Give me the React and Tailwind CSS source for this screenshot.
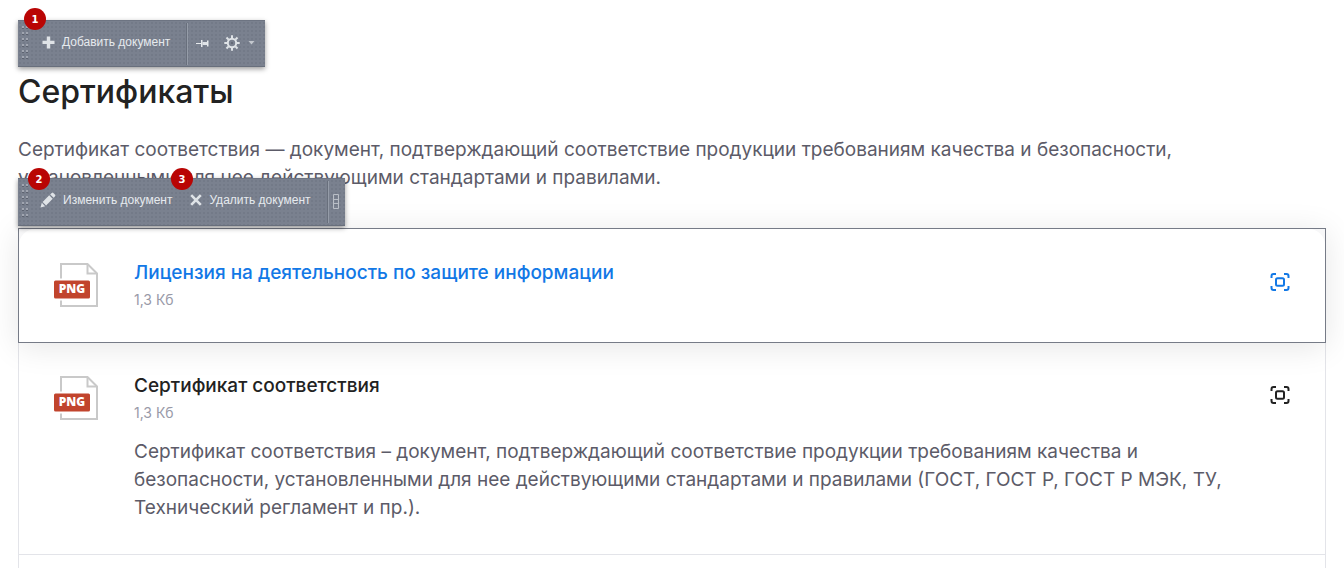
import React from "react";

const GRIP_DOTS = [3, 9, 15, 21, 27, 33];

const Badge = ({ children, className }) => (
  <span
    className={`absolute z-30 flex size-[22px] items-center justify-center rounded-full bg-[#b90504] font-['DejaVu_Sans',sans-serif] text-[10px] font-bold text-white ${className}`}
  >
    {children}
  </span>
);

const Grip = () => (
  <svg className="h-[42px] w-[6px] shrink-0" viewBox="0 0 6 42" aria-hidden="true">
    {GRIP_DOTS.map((y) => (
      <g key={y}>
        <path d={`M0 ${y + 2}h2v1h-2zM4 ${y + 2}h2v1h-2z`} fill="#5d6370" />
        <path d={`M0 ${y}h2v2h-2zM4 ${y}h2v2h-2z`} fill="#a0a5b0" />
      </g>
    ))}
  </svg>
);

const Divider = () => (
  <span className="h-[42px] w-[2px] shrink-0 border-l border-[#686f7c] bg-[#959ca8]" />
);

const PlusIcon = () => (
  <svg width="13" height="13" viewBox="0 0 13 13" fill="#dfe3e7" aria-hidden="true">
    <path d="M4.8 0.5h3.4v4.3h4.3v3.2H8.2v4.5H4.8V8H0.5V4.8h4.3z" />
  </svg>
);

const PinIcon = () => (
  <svg width="13" height="9" viewBox="0 0 13 9" aria-hidden="true">
    <path d="M0 4h5v1H0zM5 1h1.500v7H5zM11 1.500h1.500v6H11z" fill="#e6e9ec" />
    <path d="M6.500 3h4.500v3H6.500z" fill="#dfe3e7" />
  </svg>
);

const GearIcon = () => (
  <svg width="16" height="16" viewBox="0 0 16 16" fill="none" stroke="#dfe3e7" aria-hidden="true">
    <circle cx="8" cy="8" r="4.2" strokeWidth="2" />
    <circle cx="8" cy="8" r="1" fill="#5f6673" stroke="none" />
    <path
      d="M8 .3v3M8 12.700v3M.3 8h3M12.700 8h3M2.500 2.500l2.100 2.100M11.400 11.400l2.100 2.100M13.500 2.500l-2.100 2.100M4.600 11.400l-2.100 2.100"
      strokeWidth="2"
    />
  </svg>
);

const PencilIcon = () => (
  <svg width="16" height="16" viewBox="0 0 16 16" fill="#dfe3e7" aria-hidden="true">
    <path d="M.5 15.5l1.3-4.7 3.4 3.4zM2.6 9.9l6.6-6.6 3.5 3.5-6.6 6.6zM10.2 2.4l1.5-1.5q.8-.6 1.6.1l1.8 1.8q.6.8 0 1.5l-1.5 1.5z" />
  </svg>
);

const CrossIcon = () => (
  <svg width="12" height="12" viewBox="0 0 12 12" stroke="#dfe3e7" strokeWidth="2.6" aria-hidden="true">
    <path d="M1.2 1.2l9.6 9.6M10.8 1.2l-9.6 9.6" />
  </svg>
);

const CellsIcon = () => (
  <svg width="7" height="15" viewBox="0 0 7 15" fill="none" stroke="#b9bec6" aria-hidden="true">
    <path d="M.5 .5h5v14h-5zM.5 5.500h5M.5 9.500h5" />
  </svg>
);

const PngIcon = () => (
  <span className="relative flex h-11 w-[46px] shrink-0 items-center">
    <svg className="absolute inset-0" width="46" height="44" viewBox="0 0 46 44" fill="none" aria-hidden="true">
      <path d="M7 15.500V1h26.500L43 10.500V43H7v-5.500" stroke="#c9c9c9" strokeWidth="2" />
      <path d="M33.500 1v9.500H43" stroke="#c9c9c9" strokeWidth="2" />
      <rect x="0" y="17.500" width="36" height="18" rx="1.500" fill="#c1442d" />
    </svg>
    <span className="relative mt-2 w-9 text-center font-['Open_Sans',sans-serif] text-[12px] leading-4 font-extrabold text-white">
      PNG
    </span>
  </span>
);

const ZoomIcon = () => (
  <svg width="20" height="18" viewBox="0 0 20 18" fill="none" stroke="currentColor" strokeWidth="2" aria-hidden="true">
    <path d="M1.500 5V3Q1.500 1 3.500 1H6M14 1h2.500Q18.500 1 18.500 3V5M18.500 13v2Q18.500 17 16.500 17H14M6 17H3.500Q1.500 17 1.500 15V13" />
    <rect x="6" y="5.200" width="8" height="7.600" rx="1.500" />
  </svg>
);

const Toolbar = ({ children, className }) => (
  <div
    role="toolbar"
    className={`absolute left-0 z-20 flex border-t border-b border-t-[#6d7482] border-b-[#686f7c] bg-[#7a818f] bg-[radial-gradient(#737a88_1px,transparent_1px)] bg-[size:4px_4px] pt-[2px] pl-1 font-['Liberation_Sans',sans-serif] text-xs text-[#e6eaee] shadow-[0_2px_5px_rgba(0,0,0,0.4)] [text-shadow:0_0_1px_#dfe3e7] ${className}`}
  >
    {children}
  </div>
);

const ToolButton = ({ icon, children, className }) => (
  <button type="button" className={`flex h-[38px] items-center gap-[7px] whitespace-nowrap ${className}`}>
    {icon}
    {children}
  </button>
);

const DocumentRow = ({ title, size, text, active }) => (
  <div className="flex px-[35px] pt-[34px]">
    <PngIcon />
    <div className="ml-[34px] min-w-0 flex-1 pb-8">
      <a
        href="#document"
        className={`block text-[19px] leading-5 font-medium ${active ? "text-[#1278e6]" : "text-[#222]"}`}
      >
        {title}
      </a>
      <p className="mt-[7px] text-sm leading-5 text-[#999aa8]">{size}</p>
      {text && <p className="mt-[15px] max-w-[1100px] text-[19px] leading-7 text-[#5c5b68]">{text}</p>}
    </div>
    <button
      type="button"
      aria-label="Увеличить"
      className={`mt-[10px] self-start ${active ? "text-[#1278e6]" : "text-[#222]"}`}
    >
      <ZoomIcon />
    </button>
  </div>
);

const App = () => {
  return (
    <main className="overflow-hidden bg-white px-[18px] pt-5 font-[Inter,sans-serif]">
      <section className="relative pt-[52px]">
        <Badge className="-top-3 left-[6px]">1</Badge>
        <Toolbar className="top-0 h-[47px] w-[247px]">
          <Grip />
          <ToolButton className="ml-[14px]" icon={<PlusIcon />}>
            Добавить документ
          </ToolButton>
          <span className="ml-auto flex">
            <Divider />
            <button type="button" aria-label="Закрепить" className="ml-2 flex h-10 items-center">
              <PinIcon />
            </button>
            <button type="button" aria-label="Настройки" className="mr-[10px] ml-[15px] flex h-10 items-center gap-2">
              <GearIcon />
              <svg width="7" height="4" viewBox="0 0 7 4" fill="#c3c7ce" aria-hidden="true">
                <path d="M.5 0h6L3.500 3.500z" />
              </svg>
            </button>
          </span>
        </Toolbar>

        <h1 className="text-[32px] leading-10 font-medium text-[#222]">Сертификаты</h1>
        <p className="mt-6 text-[19px] leading-7 text-[#5c5b68]">
          Сертификат соответствия — документ, подтверждающий соответствие продукции требованиям качества и безопасности,
          установленными для нее действующими стандартами и правилами.
        </p>
      </section>

      <ul className="mt-9">
        <li className="relative z-10 border border-[#767b87] bg-[#f7f7f8] shadow-[0_4px_30px_rgba(0,0,0,0.1)]">
          <Badge className="-top-[61px] left-[9px]">2</Badge>
          <Badge className="-top-[61px] left-[152px]">3</Badge>
          <Toolbar className="-top-[51px] -ml-px h-12 w-[327px]">
            <Grip />
            <ToolButton className="ml-3" icon={<PencilIcon />}>
              Изменить документ
            </ToolButton>
            <ToolButton className="ml-[18px]" icon={<CrossIcon />}>
              Удалить документ
            </ToolButton>
            <span className="ml-auto flex">
              <Divider />
              <button type="button" aria-label="Ещё" className="mr-[5px] ml-1 flex h-10 items-center">
                <CellsIcon />
              </button>
            </span>
          </Toolbar>
          <div className="rounded-t-2xl bg-white">
            <DocumentRow title="Лицензия на деятельность по защите информации" size="1,3 Кб" active />
          </div>
        </li>
        <li className="-mt-px border-x border-b border-[#e3e4e9]">
          <DocumentRow
            title="Сертификат соответствия"
            size="1,3 Кб"
            text="Сертификат соответствия – документ, подтверждающий соответствие продукции требованиям качества и безопасности, установленными для нее действующими стандартами и правилами (ГОСТ, ГОСТ Р, ГОСТ Р МЭК, ТУ, Технический регламент и пр.)."
          />
        </li>
        <li className="h-5 border-x border-[#e3e4e9]" />
      </ul>
    </main>
  );
};

export default App;
